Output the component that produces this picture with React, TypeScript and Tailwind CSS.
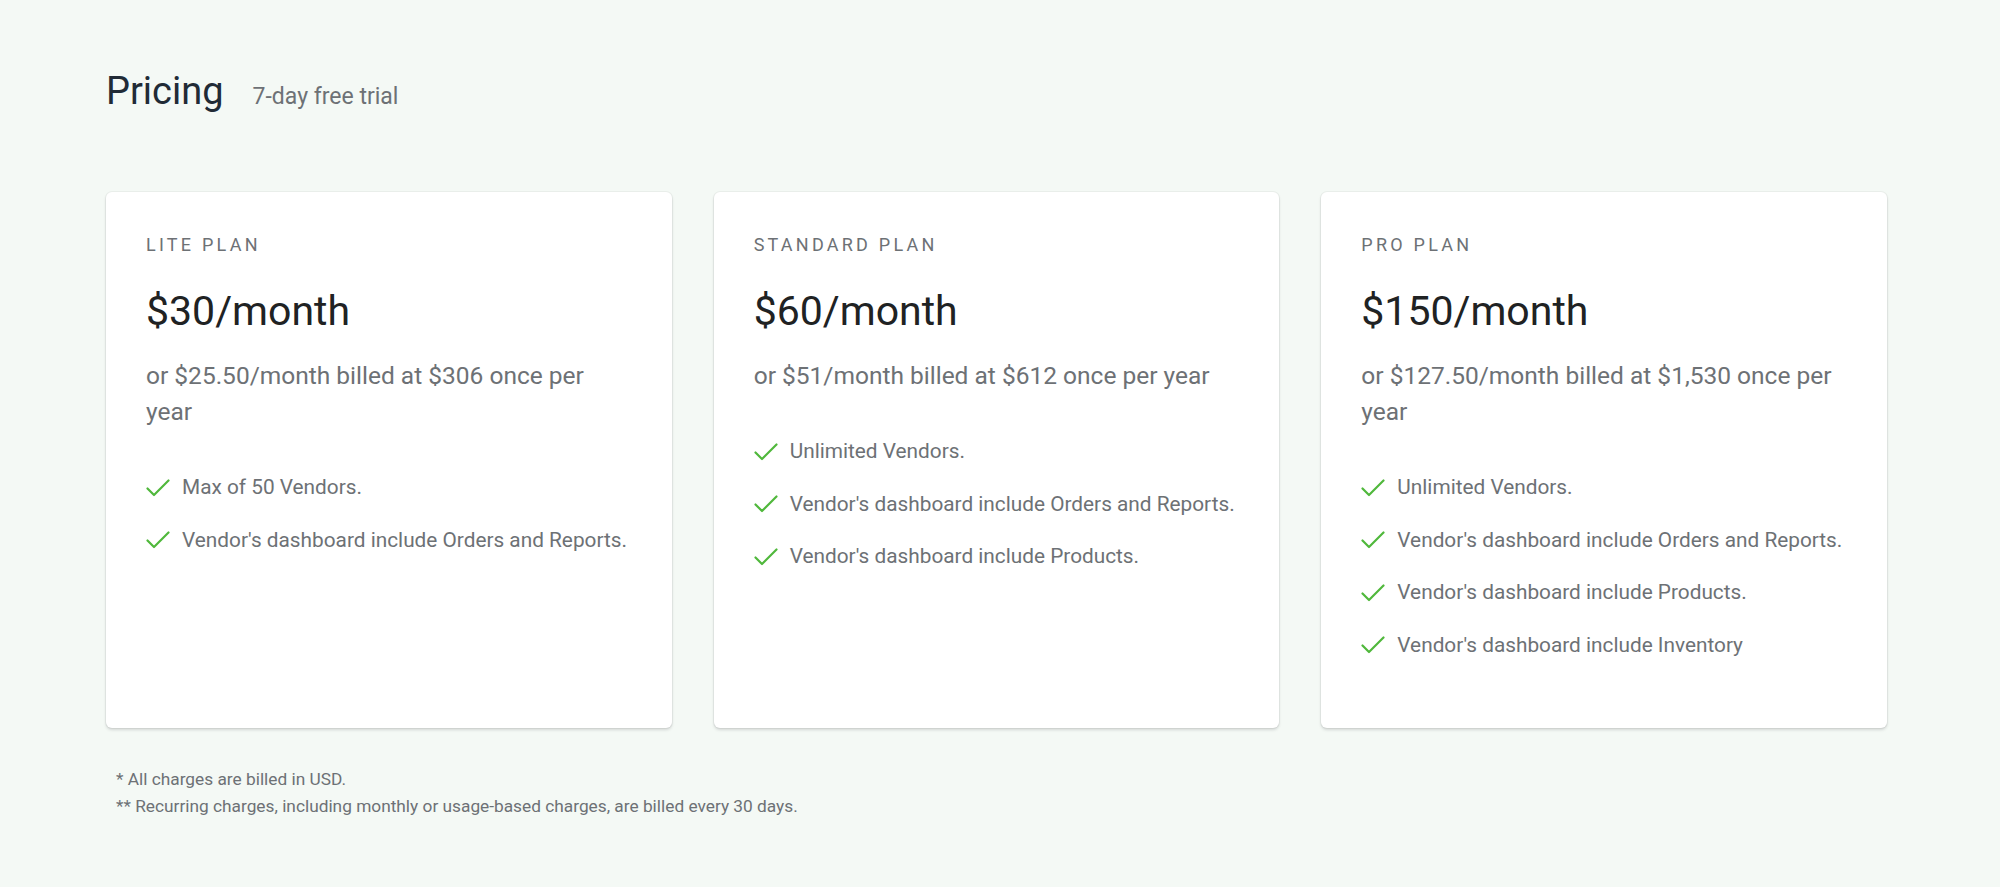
import React from "react";

type Plan = {
  name: string;
  price: string;
  yearly: string;
  features: string[];
};

const plans: Plan[] = [
  {
    name: "LITE PLAN",
    price: "$30/month",
    yearly: "or $25.50/month billed at $306 once per year",
    features: ["Max of 50 Vendors.", "Vendor's dashboard include Orders and Reports."],
  },
  {
    name: "STANDARD PLAN",
    price: "$60/month",
    yearly: "or $51/month billed at $612 once per year",
    features: [
      "Unlimited Vendors.",
      "Vendor's dashboard include Orders and Reports.",
      "Vendor's dashboard include Products.",
    ],
  },
  {
    name: "PRO PLAN",
    price: "$150/month",
    yearly: "or $127.50/month billed at $1,530 once per year",
    features: [
      "Unlimited Vendors.",
      "Vendor's dashboard include Orders and Reports.",
      "Vendor's dashboard include Products.",
      "Vendor's dashboard include Inventory",
    ],
  },
];

const Check = () => (
  <svg width="24" height="18" viewBox="0 0 24 18" fill="none" className="shrink-0">
    <polyline
      points="1.5,9.5 8,16 22.5,1.5"
      stroke="#50b83c"
      strokeWidth="2.2"
      strokeLinecap="round"
      strokeLinejoin="round"
    />
  </svg>
);

const PlanCard: React.FC<{ plan: Plan }> = ({ plan }) => {
  return (
    <div className="bg-white rounded-[6px] shadow-[0_0_0_1px_rgba(63,63,68,0.05),0_2px_3px_0_rgba(63,63,68,0.18)] pt-[41px] pb-[56px] px-[40px]">
      <p className="text-[18px] leading-[24px] tracking-[0.18em] text-[#6d7175]">{plan.name}</p>
      <p className="mt-[30px] text-[41px] leading-[48px] text-[#202223]">{plan.price}</p>
      <p className="mt-[23px] text-[24.5px] leading-[36px] text-[#6d7175]">{plan.yearly}</p>
      <ul className="mt-[32px] flex flex-col">
        {plan.features.map((f) => (
          <li key={f} className="h-[52.5px] flex items-center gap-[12px] text-[20.8px] text-[#6d7175]">
            <Check />
            <span>{f}</span>
          </li>
        ))}
      </ul>
    </div>
  );
};

export default function App() {
  return (
    <div className="min-h-[887px] bg-[#f4f9f5] font-['Roboto',sans-serif] pt-[69px] pl-[106px]">
      <div className="flex items-baseline gap-[29px]">
        <h1 className="text-[38px] leading-[44px] text-[#212b36]">Pricing</h1>
        <span className="text-[23px] text-[#6d7175]">7-day free trial</span>
      </div>
      <div className="mt-[77px] w-[1781px] grid grid-cols-3 gap-[42px]">
        {plans.map((p) => (
          <PlanCard key={p.name} plan={p} />
        ))}
      </div>
      <div className="mt-[38px] ml-[10px] text-[17.3px] leading-[27px] text-[#6d7175]">
        <p>* All charges are billed in USD.</p>
        <p>** Recurring charges, including monthly or usage-based charges, are billed every 30 days.</p>
      </div>
    </div>
  );
}
